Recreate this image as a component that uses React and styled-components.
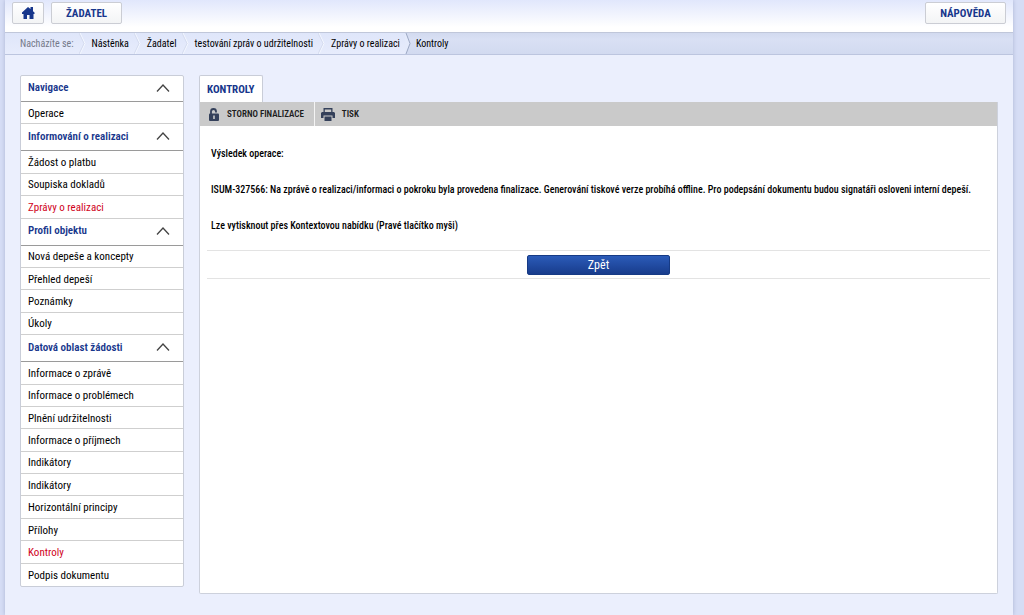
import React from "react";
import styled, { createGlobalStyle } from "styled-components";

const GlobalStyle = createGlobalStyle`
  *, *::before, *::after { box-sizing: border-box; }
  body {
    margin: 0;
    background: #d6ddf5;
    font-family: "Roboto Condensed", "Liberation Sans Narrow", Roboto, "Liberation Sans", sans-serif;
    font-size: 11px;
    color: #000;
  }
  button, a { font: inherit; color: inherit; }
`;

const Page = styled.div`
  min-height: 100vh;
  margin: 0 11px 0 5px;
  background: #ebeffd;
  box-shadow: 0 0 4px #a9b2d2;
`;

const TopBar = styled.header`
  display: flex;
  gap: 7px;
  height: 32px;
  padding: 2px 7px 8px;
  background: linear-gradient(#e1e7fc, #ffffff 85%);
`;

const TopButton = styled.button`
  display: flex;
  align-items: center;
  justify-content: center;
  width: ${(p) => p.$width}px;
  height: 22px;
  padding: 0;
  margin-left: ${(p) => (p.$end ? "auto" : "0")};
  border: 1px solid #cbcdd4;
  border-radius: 2px;
  background: linear-gradient(#ffffff, #f3f4f5);
  color: #17368c;
  font-weight: 700;
  cursor: pointer;
`;

const Breadcrumb = styled.nav`
  display: flex;
  align-items: stretch;
  height: 23px;
  background: linear-gradient(#d2daef, #d9e0f4 30%, #d2daf0);
  border-top: 1px solid #c0c7da;
  border-bottom: 1px solid #bcc5df;
  font-size: 10px;
  line-height: 21px;
`;

const Trail = styled.ol`
  display: flex;
  margin: 0;
  padding: 0 5px 0 15px;
  list-style: none;
  background: linear-gradient(#dfe6fa, #e7ecfc);
`;

const Crumb = styled.li`
  display: flex;
  white-space: nowrap;
  color: ${(p) => (p.$label ? "#747989" : "#000")};
  a { text-decoration: none; }
`;

const Arrow = styled.svg`
  flex: none;
  width: 8px;
  height: 21px;
  margin: 0 5px;
`;

const LastArrow = styled(Arrow)`
  margin: 0;
`;

const Current = styled.span`
  padding: 0 3px;
`;

const Main = styled.div`
  display: flex;
  align-items: flex-start;
  gap: 15px;
  padding: 20px 15px;
`;

const Sidebar = styled.nav`
  display: flex;
  flex: none;
  flex-direction: column;
  width: 164px;
  min-height: 512px;
  border: 1px solid #c9cdd8;
  border-radius: 2px;
  background: #fff;
`;

const GroupButton = styled.button`
  display: flex;
  flex: none;
  align-items: center;
  justify-content: space-between;
  height: 27px;
  padding: 0 12px 2px 7px;
  border: 0;
  border-bottom: 1px solid #9a9a9a;
  background: none;
  color: #17368c;
  font-weight: 600;
  cursor: pointer;
`;

const Group = styled.section`
  display: flex;
  flex-direction: column;
  flex: ${(p) => p.$count} 0 auto;
  &:first-child ${GroupButton} { height: 26px; }
`;

const Items = styled.ul`
  display: flex;
  flex: 1;
  flex-direction: column;
  margin: 0;
  padding: 0;
  list-style: none;
`;

const Item = styled.li`
  display: flex;
  flex: 1 0 22px;
  align-items: center;
  padding: 1px 7px 0;
  border-bottom: ${(p) => (p.$last ? "0" : "1px solid #cfcfcf")};
  a {
    color: ${(p) => (p.$active ? "#d0021b" : "#000")};
    text-decoration: none;
  }
`;

const Content = styled.main`
  flex: 1;
  min-width: 0;
`;

const Tab = styled.h1`
  width: 64px;
  height: 27px;
  margin: 0;
  padding: 0 7px;
  border: 1px solid #c9cdd8;
  border-bottom: 0;
  border-radius: 2px 2px 0 0;
  background: #fff;
  color: #17368c;
  font-size: 11px;
  line-height: 28px;
  white-space: nowrap;
`;

const Panel = styled.div`
  min-height: 492px;
  border: 1px solid #cdd1dc;
  border-top: 0;
  border-radius: 0 0 2px 2px;
  background: #fff;
`;

const Toolbar = styled.div`
  display: flex;
  height: 24px;
  background: #cacaca;
`;

const Tool = styled.button`
  display: flex;
  align-items: center;
  gap: 7px;
  padding: 0 10px 0 8px;
  border: 0;
  background: none;
  color: #1c1c1c;
  font-size: 9px;
  font-weight: 600;
  cursor: pointer;
  & + & { padding-left: 6px; border-left: 1px solid #f4f4f4; }
`;

const Report = styled.div`
  padding: 20px 11px 16px;
`;

const Message = styled.p`
  margin: 0 0 20px;
  font-size: 10px;
  font-weight: 500;
  line-height: 16px;
  &:last-child { margin: 0; }
`;

const Actions = styled.div`
  display: flex;
  justify-content: center;
  margin: 0 7px;
  padding: 4px 0 3px;
  border-top: 1px solid #e3e3e3;
  border-bottom: 1px solid #e3e3e3;
`;

const BackButton = styled.button`
  width: 143px;
  height: 20px;
  padding: 0;
  border: 1px solid #163a85;
  border-radius: 2px;
  background: linear-gradient(#2b5bb8, #183c8c);
  color: #fff;
  font-size: 12px;
  cursor: pointer;
`;

const groups = [
  ["Navigace", ["Operace"]],
  ["Informování o realizaci", ["Žádost o platbu", "Soupiska dokladů", "Zprávy o realizaci"]],
  ["Profil objektu", ["Nová depeše a koncepty", "Přehled depeší", "Poznámky", "Úkoly"]],
  ["Datová oblast žádosti", [
    "Informace o zprávě", "Informace o problémech", "Plnění udržitelnosti", "Informace o příjmech",
    "Indikátory", "Indikátory", "Horizontální principy", "Přílohy", "Kontroly", "Podpis dokumentu",
  ]],
];
const active = ["Zprávy o realizaci", "Kontroly"];
const crumbs = ["Nástěnka", "Žadatel", "testování zpráv o udržitelnosti", "Zprávy o realizaci"];

const Chevron = () => (
  <svg width="16" height="10" viewBox="0 0 16 10" fill="none" stroke="#444" strokeWidth="1.3" aria-hidden="true">
    <path d="M2 8.5 8 2l6 6.5" />
  </svg>
);

const Separator = () => (
  <Arrow viewBox="0 0 8 21" fill="none" aria-hidden="true">
    <path d="M1 0 6 10.500 1 21" stroke="#f5f8ff" />
    <path d="M0 0 5 10.500 0 21" stroke="#d5dcef" />
  </Arrow>
);

export default function App() {
  return (
    <>
      <GlobalStyle />
      <Page>
        <TopBar>
          <TopButton $width={32} aria-label="Domů">
            <svg width="13" height="12" viewBox="0 0 13 12" fill="#17368c" aria-hidden="true">
              <path d="M6 0 8.500 2V0h2.500v4.200L12.500 5.500V7H11.500V12H7.500V8H5v4H1.500V7H0V5.500z" />
            </svg>
          </TopButton>
          <TopButton $width={71}>ŽADATEL</TopButton>
          <TopButton $width={81} $end>NÁPOVĚDA</TopButton>
        </TopBar>
        <Breadcrumb aria-label="Nacházíte se">
          <Trail>
            <Crumb $label>Nacházíte se:<Separator /></Crumb>
            {crumbs.map((c, i) => (
              <Crumb key={c}>
                <a href="#">{c}</a>
                {i < crumbs.length - 1 && <Separator />}
              </Crumb>
            ))}
          </Trail>
          <LastArrow viewBox="0 0 8 21" fill="none" aria-hidden="true">
            <path d="M0 0h1l4 10.500L1 21H0z" fill="#e4eafb" />
            <path d="M1 0 5 10.500 1 21" stroke="#9ca8c4" />
          </LastArrow>
          <Current aria-current="page">Kontroly</Current>
        </Breadcrumb>
        <Main>
          <Sidebar aria-label="Navigace">
            {groups.map(([title, items], g) => (
              <Group key={title} $count={items.length}>
                <GroupButton aria-expanded="true">{title}<Chevron /></GroupButton>
                <Items>
                  {items.map((name, i) => (
                    <Item
                      key={i}
                      $active={active.includes(name)}
                      $last={g === groups.length - 1 && i === items.length - 1}
                    >
                      <a href="#">{name}</a>
                    </Item>
                  ))}
                </Items>
              </Group>
            ))}
          </Sidebar>
          <Content>
            <Tab>KONTROLY</Tab>
            <Panel>
              <Toolbar>
                <Tool>
                  <svg width="12" height="13" viewBox="0 0 12 13" aria-hidden="true">
                    <path d="M3 6V3.500a2.500 2.500 0 0 1 5 0V4.500" fill="none" stroke="#34405a" strokeWidth="1.800" />
                    <rect x="1" y="5.500" width="10" height="7.500" rx="1" fill="#34405a" />
                    <path d="M5.200 7.500h1.600v3.500H5.200z" fill="#cacaca" />
                  </svg>
                  STORNO FINALIZACE
                </Tool>
                <Tool>
                  <svg width="14" height="13" viewBox="0 0 14 13" fill="#34405a" aria-hidden="true">
                    <path d="M2.500 0h9v4h-1.300v-2.600H3.800v2.600H2.500z" />
                    <path d="M1 4h12l1 1v5h-2.500V7.500h-9V10H0V5z" />
                    <path d="M3.500 8.500h7V13h-7z" />
                  </svg>
                  TISK
                </Tool>
              </Toolbar>
              <Report>
                <Message>Výsledek operace:</Message>
                <Message>
                  ISUM-327566: Na zprávě o realizaci/informaci o pokroku byla provedena finalizace. Generování tiskové
                  verze probíhá offline. Pro podepsání dokumentu budou signatáři osloveni interní depeší.
                </Message>
                <Message>Lze vytisknout přes Kontextovou nabídku (Pravé tlačítko myši)</Message>
              </Report>
              <Actions>
                <BackButton>Zpět</BackButton>
              </Actions>
            </Panel>
          </Content>
        </Main>
      </Page>
    </>
  );
}
